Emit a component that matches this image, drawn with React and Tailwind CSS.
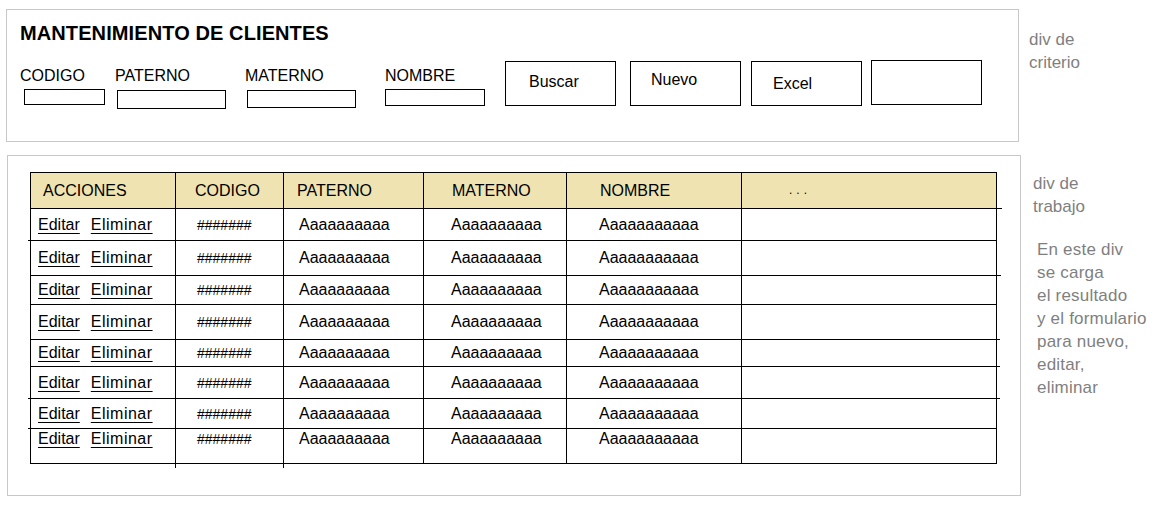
import React from "react";

const rows = [
  { h: "h-[32px]", align: "items-center" },
  { h: "h-[35px]", align: "items-center" },
  { h: "h-[29px]", align: "items-center pl-[1px]" },
  { h: "h-[35px]", align: "items-center" },
  { h: "h-[27px]", align: "items-center" },
  { h: "h-[32px]", align: "items-center" },
  { h: "h-[30px]", align: "items-center" },
  { h: "h-[35px]", align: "items-start" },
];

function Cell({ children, className = "" }) {
  return (
    <div className={`flex border-r border-b border-black ${className}`}>{children}</div>
  );
}

export default function App() {
  return (
    <div
      className="w-[1155px] h-[515px] bg-white text-black overflow-hidden"
      style={{ fontFamily: '"Liberation Sans", Arial, sans-serif' }}
    >
      {/* Row 1: criterio */}
      <div className="flex items-start pt-[9px] pl-[6px]">
        <div className="w-[1013px] h-[133px] border border-[#c8c8c8] pl-[13px] pt-[11px]">
          <div className="text-[20px] leading-[24px] font-bold tracking-[0.1px]">MANTENIMIENTO DE CLIENTES</div>
          <div className="flex items-start mt-[16px] text-[16px] leading-[20px]">
            <div className="w-[95px] flex flex-col">
              <span className="mt-[5px]">CODIGO</span>
              <div className="ml-[4px] mt-[3px] w-[81px] h-[16px] border border-black" />
            </div>
            <div className="w-[130px] flex flex-col">
              <span className="mt-[5px]">PATERNO</span>
              <div className="ml-[2px] mt-[4px] w-[109px] h-[19px] border border-black" />
            </div>
            <div className="w-[140px] flex flex-col">
              <span className="mt-[5px]">MATERNO</span>
              <div className="ml-[2px] mt-[4px] w-[109px] h-[18px] border border-black" />
            </div>
            <div className="w-[120px] flex flex-col">
              <span className="mt-[5px]">NOMBRE</span>
              <div className="mt-[3px] w-[100px] h-[17px] border border-black" />
            </div>
            <div className="w-[111px] h-[45px] border border-black flex items-center pl-[23px] pb-[3px]">Buscar</div>
            <div className="ml-[14px] w-[111px] h-[45px] border border-black flex items-center pl-[20px] pb-[7px]">Nuevo</div>
            <div className="ml-[10px] w-[111px] h-[45px] border border-black flex items-center pl-[21px] pt-[1px]">Excel</div>
            <div className="ml-[9px] -mt-[1px] w-[111px] h-[45px] border border-black" />
          </div>
        </div>
        <div className="ml-[10px] mt-[19px] text-[17px] leading-[23px] text-[#7f7f7f]">
          <div>div de</div>
          <div>criterio</div>
        </div>
      </div>

      {/* Row 2: trabajo */}
      <div className="flex items-start mt-[13px] pl-[7px]">
        <div className="w-[1014px] h-[341px] border border-[#c8c8c8] pl-[22px] pt-[16px]">
          <div className="relative w-[967px] border-l border-t border-black">
            <div className="grid grid-cols-[145px_108px_140px_143px_175px_255px] h-[36px] bg-[#efe3b1] text-[16px] leading-[20px]">
              <Cell className="items-center pl-[12px]">ACCIONES</Cell>
              <Cell className="items-center pl-[19px]">CODIGO</Cell>
              <Cell className="items-center pl-[13px]">PATERNO</Cell>
              <Cell className="items-center pl-[28px]">MATERNO</Cell>
              <Cell className="items-center pl-[33px]">NOMBRE</Cell>
              <Cell className="items-center pl-[47px] pb-[2px] tracking-[4px] text-[12px]">...</Cell>
            </div>
            {rows.map((r, i) => (
              <div
                key={i}
                className={`grid grid-cols-[145px_108px_140px_143px_175px_255px] ${r.h} text-[16px] leading-[20px]`}
              >
                <Cell className={`${r.align} pl-[7px]`}>
                  <span className="underline underline-offset-[3px]">Editar</span>
                  <span className="ml-[11px] underline underline-offset-[3px] tracking-[0.5px]">Eliminar</span>
                </Cell>
                <Cell className={`${r.align} pl-[21px]`}>
                  <span className="text-[14px]">#######</span>
                </Cell>
                <Cell className={`${r.align} pl-[15px]`}>Aaaaaaaaaa</Cell>
                <Cell className={`${r.align} pl-[27px]`}>Aaaaaaaaaa</Cell>
                <Cell className={`${r.align} pl-[32px]`}>Aaaaaaaaaaa</Cell>
                <Cell className={r.align} />
              </div>
            ))}
            {/* small stray line ends of the drawing */}
            <span className="absolute left-[966px] top-[35px] w-[5px] h-px bg-black" />
            <span className="absolute left-[966px] top-[102px] w-[4px] h-px bg-black" />
            <span className="absolute left-[966px] top-[166px] w-[3px] h-px bg-black" />
            <span className="absolute left-[966px] top-[193px] w-[3px] h-px bg-black" />
            <span className="absolute left-[966px] top-[225px] w-[3px] h-px bg-black" />
            <span className="absolute -left-[3px] top-[67px] w-[3px] h-px bg-black" />
            <span className="absolute -left-[3px] top-[225px] w-[3px] h-px bg-black" />
            <span className="absolute -left-[3px] top-[255px] w-[3px] h-px bg-black" />
            <span className="absolute left-[144px] top-[291px] w-px h-[4px] bg-black" />
            <span className="absolute left-[252px] top-[291px] w-px h-[4px] bg-black" />
          </div>
        </div>
        <div className="ml-[12px] mt-[17px] text-[17px] leading-[23px] text-[#7f7f7f]">
          <div>div de</div>
          <div>trabajo</div>
          <div className="ml-[4px] mt-[20px] tracking-[0.2px]">
            <div>En este div</div>
            <div>se carga</div>
            <div>el resultado</div>
            <div>y el formulario</div>
            <div>para nuevo,</div>
            <div>editar,</div>
            <div>eliminar</div>
          </div>
        </div>
      </div>
    </div>
  );
}
